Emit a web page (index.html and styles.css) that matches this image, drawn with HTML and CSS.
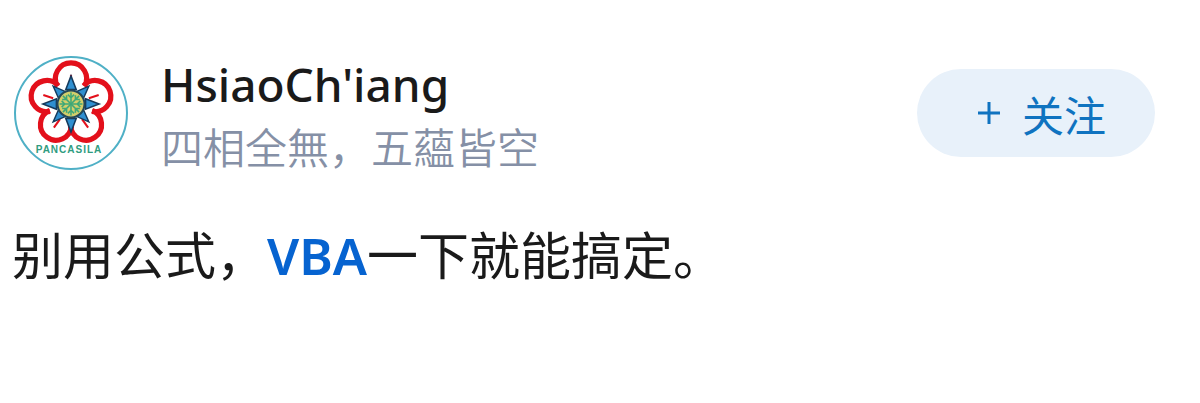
FILE: index.html
```
<!DOCTYPE html>
<html lang="zh-CN">
<head>
  <meta charset="UTF-8" />
  <meta name="viewport" content="width=device-width, initial-scale=1.0"/>
  <title>HsiaoCh'iang</title>
  <link rel="stylesheet" href="styles.css">
</head>
<body>
  <article class="answer">
    <header class="author">
      <svg class="avatar" viewBox="0 0 114 114" role="img" aria-label="Pancasila">
        <defs>
          <g id="petal" fill="none" stroke="#e3101b">
            <path stroke-width="5" d="M-13 -17A15 15 0 1 1 13 -17"/>
            <path stroke-width="2" d="M0 -18V-28"/>
          </g>
          <path id="ray" d="M-5 -14L0 -27L5 -14Z" fill="#2f8fd0" stroke="#153a5c" stroke-width="1.5"/>
          <path id="spoke" d="M0 0V-11M-3 -9L0 -6L3 -9"/>
        </defs>
        <circle cx="57" cy="57" r="56" fill="#fff" stroke="#4fb0c6" stroke-width="2"/>
        <g transform="translate(57 48) scale(1.04)">
          <use href="#petal"/>
          <use href="#petal" transform="rotate(72)"/>
          <use href="#petal" transform="rotate(144)"/>
          <use href="#petal" transform="rotate(216)"/>
          <use href="#petal" transform="rotate(288)"/>
          <use href="#ray"/>
          <use href="#ray" transform="rotate(45) scale(.9)"/>
          <use href="#ray" transform="rotate(90)"/>
          <use href="#ray" transform="rotate(135) scale(.9)"/>
          <use href="#ray" transform="rotate(180)"/>
          <use href="#ray" transform="rotate(225) scale(.9)"/>
          <use href="#ray" transform="rotate(270)"/>
          <use href="#ray" transform="rotate(315) scale(.9)"/>
          <circle r="13" fill="#d3cf6b" stroke="#24485a" stroke-width="2"/>
          <g fill="none" stroke="#3fa878" stroke-width="1.5">
            <use href="#spoke"/>
            <use href="#spoke" transform="rotate(45)"/>
            <use href="#spoke" transform="rotate(90)"/>
            <use href="#spoke" transform="rotate(135)"/>
            <use href="#spoke" transform="rotate(180)"/>
            <use href="#spoke" transform="rotate(225)"/>
            <use href="#spoke" transform="rotate(270)"/>
            <use href="#spoke" transform="rotate(315)"/>
          </g>
        </g>
        <text class="avatar-text" x="55" y="97" text-anchor="middle">PANCASILA</text>
      </svg>
      <div class="info">
        <h2 class="name">HsiaoCh'iang</h2>
        <p class="bio">四相全無，五蘊皆空</p>
      </div>
      <button class="follow" type="button">
        <svg class="plus" viewBox="0 0 22 22" aria-hidden="true">
          <path d="M11 0V22M0 11H22" stroke="currentColor" stroke-width="3"/>
        </svg>
        关注
      </button>
    </header>
    <p class="content">别用公式，<a href="#vba">VBA</a>一下就能搞定。</p>
  </article>
</body>
</html>
```
FILE: styles.css
```
body {
  margin: 0;
  background: #fff;
  color: #1a1a1a;
  font-family: "Noto Sans", "Noto Sans CJK SC", sans-serif;
}
.answer {
  padding: 51px 45px 51px 12px;
}
.author {
  display: flex;
  align-items: center;
}
.avatar {
  flex: none;
  width: 114px;
  height: 114px;
  margin: 0 33px 0 2px;
}
.avatar-text {
  font: bold 10px "Liberation Sans", sans-serif;
  letter-spacing: 1px;
  fill: #2f9c80;
}
.info {
  flex: 1;
}
.name {
  margin: 0;
  font-size: 46px;
  font-weight: 500;
  line-height: 66px;
}
.bio {
  margin: 0;
  color: #8590a6;
  font-family: "Noto Sans CJK SC", sans-serif;
  font-size: 42px;
  font-weight: 350;
  line-height: 58px;
}
.follow {
  display: flex;
  align-items: center;
  justify-content: center;
  gap: 22px;
  width: 238px;
  height: 88px;
  padding: 0 0 0 12px;
  border: none;
  border-radius: 44px;
  background: #e8f1fa;
  color: #0f73c0;
  font-family: "Noto Sans CJK SC", sans-serif;
  font-size: 42px;
  cursor: pointer;
}
.plus {
  width: 22px;
  height: 22px;
}
.content {
  margin: 40px 0 0;
  font-family: "Noto Sans CJK SC", sans-serif;
  font-size: 51px;
  line-height: 76px;
}
.content a {
  color: #0663d0;
  font-family: "Noto Sans", sans-serif;
  font-weight: 600;
  text-decoration: none;
}
```
